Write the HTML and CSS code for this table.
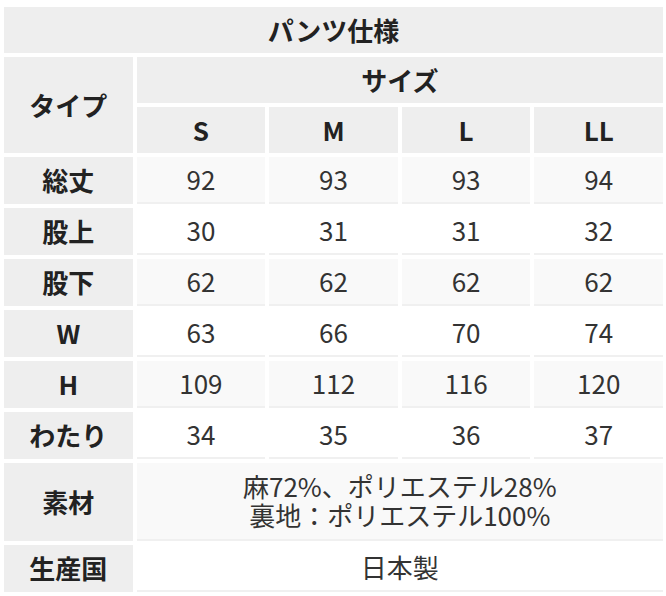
FILE: index.html
```html
<!DOCTYPE html>
<html lang="ja">
<head>
<meta charset="utf-8">
<link rel="stylesheet" href="styles.css">
</head>
<body>
<table class="spec">
  <thead>
    <tr><th class="title" colspan="5">パンツ仕様</th></tr>
    <tr><th class="type" rowspan="2">タイプ</th><th colspan="4" class="size">サイズ</th></tr>
    <tr><th>S</th><th>M</th><th>L</th><th>LL</th></tr>
  </thead>
  <tbody>
    <tr class="odd"><th>総丈</th><td>92</td><td>93</td><td>93</td><td>94</td></tr>
    <tr><th>股上</th><td>30</td><td>31</td><td>31</td><td>32</td></tr>
    <tr class="odd"><th>股下</th><td>62</td><td>62</td><td>62</td><td>62</td></tr>
    <tr><th>W</th><td>63</td><td>66</td><td>70</td><td>74</td></tr>
    <tr class="odd"><th>H</th><td>109</td><td>112</td><td>116</td><td>120</td></tr>
    <tr><th>わたり</th><td>34</td><td>35</td><td>36</td><td>37</td></tr>
    <tr class="odd material"><th>素材</th><td colspan="4">麻72%、ポリエステル28%<br>裏地：ポリエステル100%</td></tr>
    <tr><th>生産国</th><td colspan="4">日本製</td></tr>
  </tbody>
</table>
</body>
</html>
```
FILE: styles.css
```css
html, body {
  margin: 0;
  padding: 0;
  background: #fff;
}
body {
  font-family: "Noto Sans CJK JP", "Noto Sans", sans-serif;
  color: #333;
}
.spec {
  width: 667px;
  margin-top: 3px;
  border-collapse: separate;
  border-spacing: 4px;
  table-layout: fixed;
  font-size: 26px;
}
.spec th, .spec td {
  text-align: center;
  vertical-align: middle;
  padding: 0;
  line-height: 1.1;
}
.spec th {
  background: #eeeeee;
  color: #222;
  font-weight: 700;
  height: 46px;
}
.spec td {
  height: 45px;
  background: #fff;
  border-bottom: 2px solid #f0f0f0;
}
.spec tbody th {
  height: 47px;
}
.spec tr.odd td {
  background: #f9f9f9;
}
.spec tr.material td {
  height: 76px;
}
.spec tr.material th {
  height: 78px;
}
```
